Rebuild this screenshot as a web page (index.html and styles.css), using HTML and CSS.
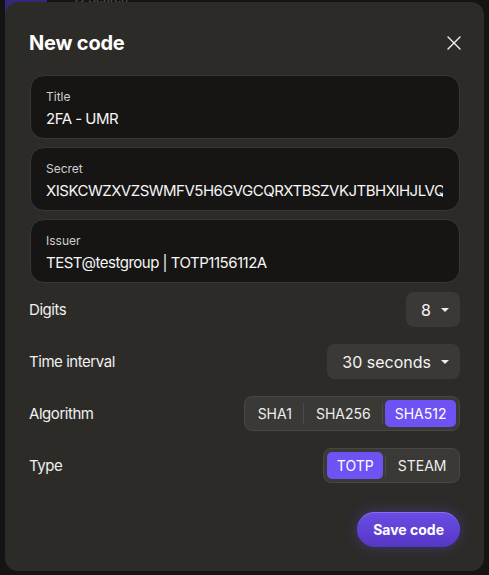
FILE: index.html
```html
<!DOCTYPE html>
<html>
<head>
<meta charset="utf-8">
<link rel="stylesheet" href="styles.css">
</head>
<body>
<div class="backdrop">
  <div class="app-badge"></div>
  <div class="app-search">○ Search</div>
</div>
<div class="dialog">
  <div class="header">
    <h1 class="title">New code</h1>
    <svg class="close" width="14" height="14" viewBox="0 0 14 14"><path d="M1 1L13 13M13 1L1 13" stroke="#f2f2f2" stroke-width="1.4" stroke-linecap="round"/></svg>
  </div>
  <div class="fields">
    <div class="field"><div class="label">Title</div><div class="value">2FA - UMR</div></div>
    <div class="field"><div class="label">Secret</div><div class="value clip">XISKCWZXVZSWMFV5H6GVGCQRXTBSZVKJTBHXIHJLVQUQ</div></div>
    <div class="field"><div class="label">Issuer</div><div class="value">TEST@testgroup | TOTP1156112A</div></div>
  </div>
  <div class="rows">
    <div class="row"><span class="row-label">Digits</span><div class="select">8<span class="caret"></span></div></div>
    <div class="row"><span class="row-label">Time interval</span><div class="select">30 seconds<span class="caret"></span></div></div>
    <div class="row"><span class="row-label">Algorithm</span>
      <div class="seg"><span class="seg-item">SHA1</span><span class="seg-sep"></span><span class="seg-item">SHA256</span><span class="seg-sep"></span><span class="seg-item active">SHA512</span></div>
    </div>
    <div class="row"><span class="row-label">Type</span>
      <div class="seg"><span class="seg-item active">TOTP</span><span class="seg-sep"></span><span class="seg-item">STEAM</span></div>
    </div>
  </div>
  <div class="footer"><button class="save">Save code</button></div>
</div>
</body>
</html>
```
FILE: styles.css
```css
* { box-sizing: border-box; }
html, body { margin: 0; padding: 0; }
body {
  background: #141414;
  font-family: Inter, "Noto Sans", sans-serif;
  color: #f2f2f2;
  width: 489px;
  height: 575px;
  overflow: hidden;
  position: relative;
}
.backdrop { position: absolute; inset: 0; z-index: 0; }
.app-badge {
  position: absolute; left: 5px; top: 0; width: 42px; height: 23px;
  background: #35287a; border-radius: 0 0 4px 0;
}
.app-search {
  position: absolute; left: 74px; top: -9px; font-size: 12px; color: #555;
}
.dialog {
  position: relative; z-index: 1;
  margin: 2px 5px 0 5px;
  width: 479px; height: 569px;
  background: #2d2b28;
  border-radius: 13px;
  padding: 0 24px 0 24px;
  display: flex; flex-direction: column;
}
.header {
  display: flex; align-items: center; justify-content: space-between;
  height: 71px; padding-top: 10px;
}
.title { margin: 0; font-size: 20px; font-weight: 700; color: #fff; letter-spacing: -0.2px; }
.close { display: block; margin-right: -1px; }
.fields { display: flex; flex-direction: column; gap: 8px; margin-top: 2px; margin-left: 1px; }
.field {
  height: 64px;
  background: #161514;
  border: 1px solid #37363a;
  border-radius: 14px;
  padding: 13px 15px 0 15px;
}
.label { font-size: 12px; color: #cfcfcf; line-height: 16px; }
.value { font-size: 15px; color: #f6f6f6; line-height: 22px; margin-top: 3px; white-space: nowrap; letter-spacing: -0.5px; }
.clip { overflow: hidden; width: 397px; }
.rows { display: flex; flex-direction: column; gap: 17px; margin-top: 9px; }
.row { display: flex; align-items: center; justify-content: space-between; height: 35px; }
.row-label { font-size: 15px; color: #f0f0f0; letter-spacing: -0.45px; }
.select {
  height: 35px; background: #3a3936; border-radius: 8px;
  display: flex; align-items: center;
  padding: 0 11px 0 15px; font-size: 16px; color: #f4f4f4;
}
.caret {
  width: 0; height: 0; margin-left: 10px;
  border-left: 4px solid transparent; border-right: 4px solid transparent;
  border-top: 4px solid #eee;
}
.seg {
  height: 35px; background: #3a3936; border: 1px solid #47464a;
  border-radius: 8px; padding: 3px; display: flex; align-items: stretch;
}
.seg-item {
  display: flex; align-items: center; padding: 0 9.5px; font-size: 14px;
  color: #eee; border-radius: 5px;
}
.seg-item.active { background: #6e52f3; color: #fff; }
.seg-sep { width: 1px; background: #4b4a4c; margin: 3px 2px; }
.footer { display: flex; justify-content: flex-end; margin-top: 29px; }
.save {
  height: 35px; padding: 0 16px; border: none; border-radius: 18px;
  background: linear-gradient(#6a4de6, #5637c4);
  color: #fff; font-family: Inter, sans-serif; font-size: 14px; font-weight: 700;
  box-shadow: 0 0 14px rgba(110, 80, 240, 0.35), inset 0 1px 0 rgba(255,255,255,0.2);
}
```
